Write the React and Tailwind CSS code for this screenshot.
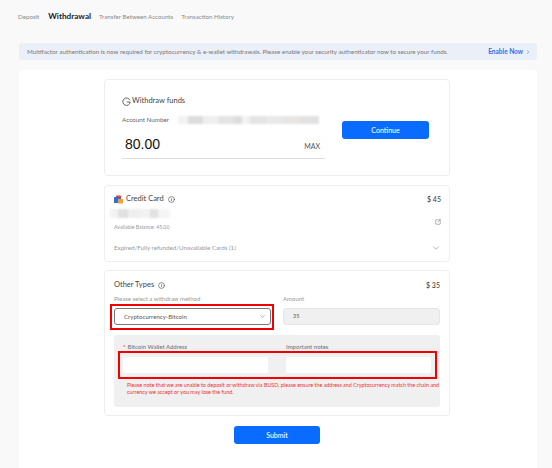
import React from 'react';
import { ChevronDown, ChevronRight, Info, SquareArrowOutUpRight } from 'lucide-react';

const font = { fontFamily: '"Lato", "Open Sans", sans-serif' };

// blurred out account numbers
const BlurBar = ({ shades, className }) => (
  <div className={`flex blur-[1px] ${className}`}>
    {shades.map((s, i) => (
      <div key={i} className="h-full" style={{ width: s[0], backgroundColor: s[1] }} />
    ))}
  </div>
);

const CardIcon = () => (
  <svg width="9" height="9" viewBox="0 0 9 9">
    <rect x="2" y="0.5" width="5" height="4" rx="0.5" fill="#e2453c" />
    <rect x="0" y="2" width="6" height="6" rx="0.5" fill="#2f6fd6" />
    <rect x="4" y="4" width="5" height="4.5" rx="0.5" fill="#f0a23a" />
  </svg>
);

const WithdrawIcon = () => (
  <svg width="9" height="9" viewBox="0 0 9 9" fill="none" stroke="#555" strokeWidth="0.9">
    <path d="M7.9 3.2A3.7 3.7 0 1 0 8.2 5H4.8" />
  </svg>
);

const Field = ({ label, required }) => (
  <div className="flex flex-col w-[145px]">
    <div className="text-[6px] leading-[8px] text-[#777] font-medium h-[14px]">
      {required && <span className="text-[#e33] mr-[2px]">*</span>}
      {label}
    </div>
    <div className="h-[16px] rounded-[2px] bg-white" />
  </div>
);

export default function App() {
  return (
    <div className="relative w-[552px] h-[468px] overflow-hidden bg-[#f9f9f9] text-[#333]" style={font}>
      {/* Tabs */}
      <div className="flex items-center h-[33px] pl-[18px] text-[6.2px] text-[#8a8a8a]">
        <span className="mr-[9px]">Deposit</span>
        <span className="mr-[8px] text-[8.2px] font-bold text-[#222]">Withdrawal</span>
        <span className="mr-[8px]">Transfer Between Accounts</span>
        <span>Transaction History</span>
      </div>

      <div className="flex flex-col pl-[19px] pr-[15px] pt-[10px]">
        {/* Banner */}
        <div className="flex items-center justify-between h-[17px] rounded-[3px] bg-[#ebf0f8] pl-[8px] pr-[6px] text-[6.25px] text-[#777]">
          <span>Multifactor authentication is now required for cryptocurrency &amp; e-wallet withdrawals. Please enable your security authenticator now to secure your funds.</span>
          <span className="flex items-center font-bold text-[6.5px] text-[#2a6fe8]">
            Enable Now
            <ChevronRight size={6} className="ml-[2px]" />
          </span>
        </div>

        {/* Main panel */}
        <div className="flex flex-col items-center h-[400px] mt-[10px] rounded-t-[3px] bg-white pt-[9px] pr-[2px]">
          {/* Withdraw funds */}
          <div className="flex items-start w-[346px] h-[97px] rounded-[4px] border border-[#eee] pl-[17px] pr-[20px]">
            <div className="flex flex-col w-[203px] pt-[16px]">
              <div className="flex items-center h-[10px] text-[7.5px] text-[#444]">
                <span className="mr-[1px] mt-[1px]"><WithdrawIcon /></span>
                Withdraw funds
              </div>
              <div className="flex items-center h-[8px] mt-[10px] text-[6.3px] text-[#666]">
                <span className="w-[56px]">Account Number</span>
                <BlurBar
                  className="h-[8px]"
                  shades={[[10, '#f2f2f2'], [15, '#ddd'], [16, '#eee'], [15, '#e4e4e4'], [8, '#ddd'], [8, '#f2f2f2'], [16, '#e4e4e4'], [18, '#e8e8e8'], [16, '#e8e4e0'], [19, '#e2e2e2']]}
                />
              </div>
              <div className="flex items-center justify-between h-[30px] mt-[5px] border-b-[1px] border-[#ddd] pr-[5px]">
                <span className="text-[14px] text-[#111] ml-[3px] mt-[1px]" style={{ fontFamily: '"Liberation Sans", sans-serif' }}>80.00</span>
                <span className="text-[7px] text-[#555] mt-[5px]">MAX</span>
              </div>
            </div>
            <div className="flex items-center justify-center w-[87px] h-[18px] mt-[41px] ml-[17px] rounded-[3px] bg-[#0a6cff] text-[7px] font-medium text-white">
              Continue
            </div>
          </div>

          {/* Credit card */}
          <div className="flex flex-col w-[346px] h-[77px] mt-[9px] rounded-[4px] border border-[#eee] pl-[9px] pr-[8px] text-[#444]">
            <div className="flex items-center justify-between h-[10px] mt-[8px]">
              <div className="flex items-center text-[7.5px]">
                <CardIcon />
                <span className="ml-[3px]">Credit Card</span>
                <Info size={7} className="ml-[4px]" />
              </div>
              <span className="text-[7px] font-medium">$ 45</span>
            </div>
            <BlurBar
              className="h-[9px] mt-[5px] -ml-[4px]"
              shades={[[8, '#f2f2f2'], [10, '#e0e0e0'], [12, '#eee'], [10, '#f2f2f2'], [8, '#e2e2e2'], [12, '#f4f4f4']]}
            />
            <div className="flex items-center justify-between h-[8px] mt-[6px] text-[5.2px] text-[#999]">
              <span>Available Balance: 45.00</span>
              <SquareArrowOutUpRight size={6} className="text-[#666] -mt-[12px]" />
            </div>
            <div className="flex items-center justify-between h-[8px] mt-[12px] text-[6.2px] text-[#999]">
              <span>Expired/Fully refunded/Unavailable Cards (1)</span>
              <ChevronDown size={10} className="text-[#aaa]" />
            </div>
          </div>

          {/* Other types */}
          <div className="flex flex-col w-[346px] h-[146px] mt-[8px] rounded-[4px] border border-[#eee] px-[9px] text-[#444]">
            <div className="flex items-center justify-between h-[10px] mt-[9px]">
              <div className="flex items-center text-[7.5px]">
                <span>Other Types</span>
                <Info size={7} className="ml-[4px]" />
              </div>
              <span className="text-[7px] font-medium">$ 35</span>
            </div>
            <div className="flex justify-between mt-[5px]">
              <div className="flex flex-col w-[157px]">
                <div className="h-[13px] text-[6px] leading-[8px] text-[#999]">Please select a withdraw method</div>
                <div className="relative flex items-center justify-between h-[17px] rounded-[3px] border border-[#777] pl-[9px] pr-[4px] text-[6.1px] font-medium text-[#666]">
                  Cryptocurrency-Bitcoin
                  <ChevronDown size={7} className="text-[#777]" />
                  <div className="absolute -left-[5px] -right-[4px] -top-[5px] -bottom-[6px] border-2 border-[#f00000]" />
                </div>
              </div>
              <div className="flex flex-col w-[157px]">
                <div className="h-[13px] text-[6px] leading-[8px] text-[#999]">Amount</div>
                <div className="flex items-center h-[17px] rounded-[3px] border border-[#e6e6e6] bg-[#f0f0f0] pl-[9px] text-[5.5px] font-medium text-[#666]">35</div>
              </div>
            </div>
            {/* Wallet fields */}
            <div className="relative flex flex-col h-[72px] mt-[10px] rounded-[3px] bg-[#f0f0f0] px-[9px] pt-[8px]">
              <div className="flex justify-between">
                <Field label="Bitcoin Wallet Address" required />
                <Field label="Important notes" />
              </div>
              <p className="w-[318px] ml-[4px] mt-[9px] text-[5.4px] leading-[7px] text-[#f03030]">
                Please note that we are unable to deposit or withdraw via BUSD, please ensure the address and Cryptocurrency match the chain and currency we accept or you may lose the fund.
              </p>
              <div className="absolute left-[4px] right-[3px] top-[16px] h-[28px] border-2 border-[#f00000]" />
            </div>
          </div>

          <div className="flex items-center justify-center w-[86px] h-[18px] mt-[10px] rounded-[3px] bg-[#0a6cff] text-[7px] font-medium text-white">
            Submit
          </div>
        </div>
      </div>
    </div>
  );
}
